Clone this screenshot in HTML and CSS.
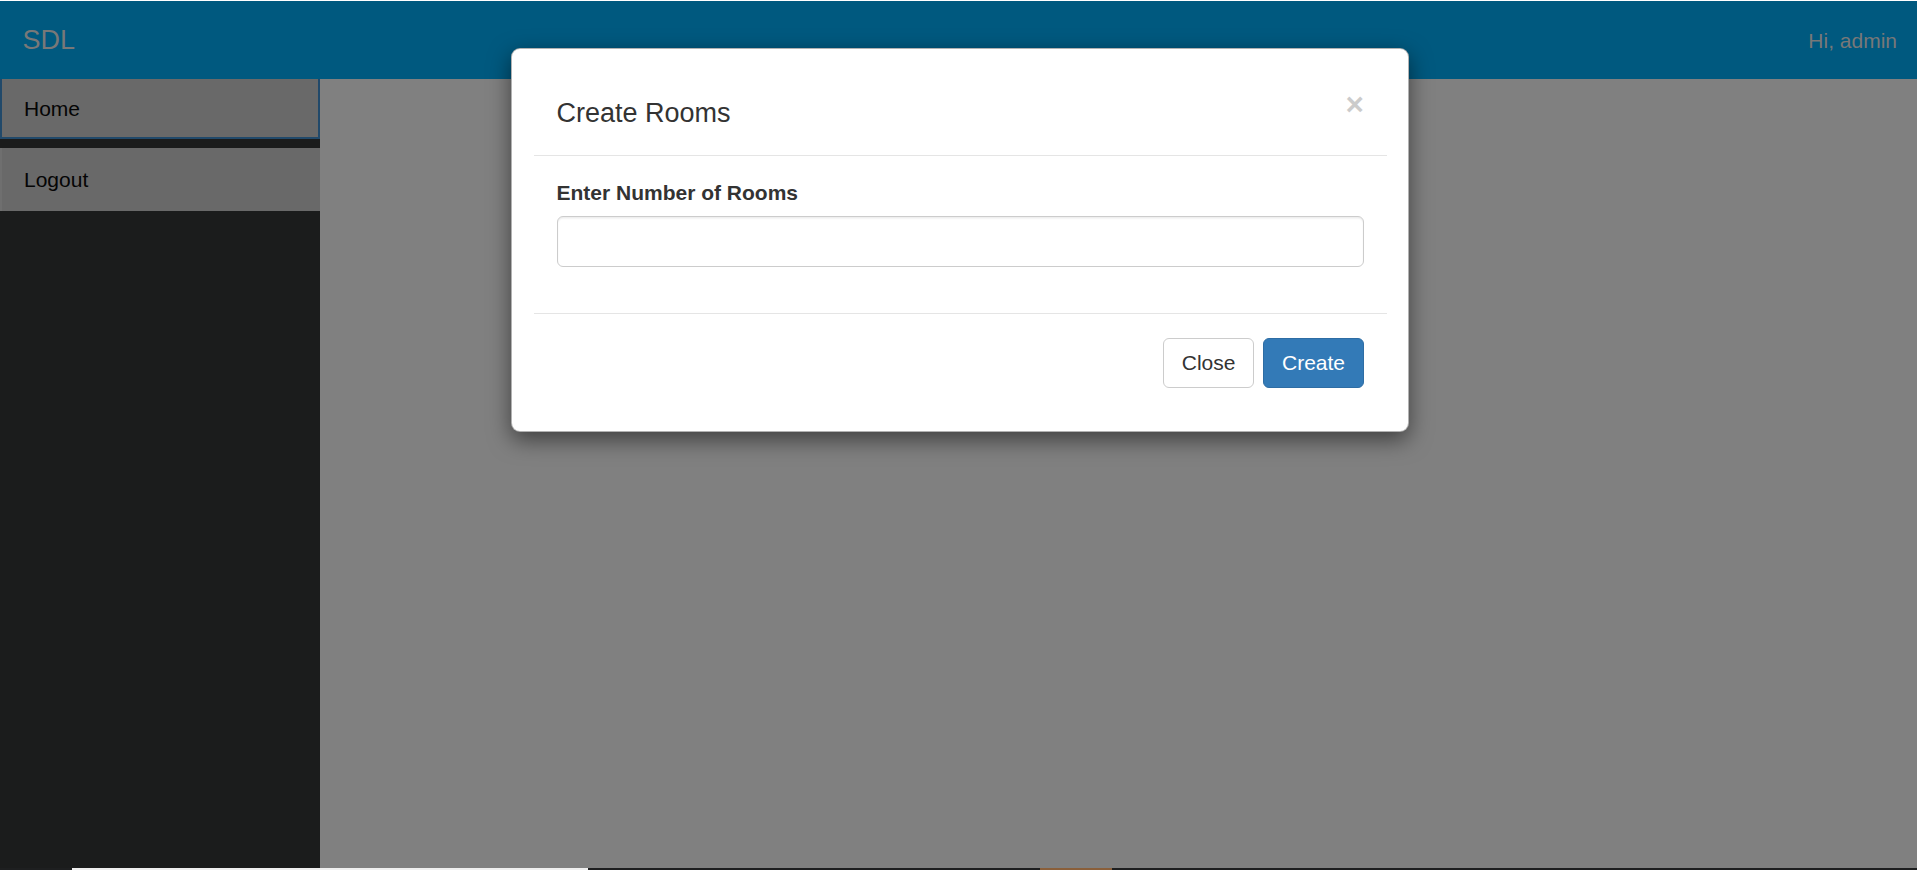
FILE: index.html
```html
<!DOCTYPE html>
<html lang="en">
<head>
<meta charset="utf-8">
<title>SDL</title>
<link rel="stylesheet" href="styles.css">
</head>
<body>
<div class="page">
  <div class="top-line"></div>
  <header class="navbar">
    <span class="brand">SDL</span>
    <span class="greeting">Hi, admin</span>
  </header>
  <div class="layout">
    <nav class="sidebar">
      <a class="side-item side-item-active">Home</a>
      <a class="side-item side-item-plain">Logout</a>
    </nav>
    <main class="content"></main>
  </div>
  <div class="taskbar">
    <span class="tb tb-dark tb-a"></span>
    <span class="tb tb-light tb-b"></span>
    <span class="tb tb-dark tb-c"></span>
    <span class="tb tb-brown tb-d"></span>
    <span class="tb tb-dark tb-e"></span>
  </div>
</div>

<div class="modal">
  <div class="modal-header">
    <h4 class="modal-title">Create Rooms</h4>
    <button class="close" type="button">&times;</button>
  </div>
  <div class="modal-body">
    <label class="field-label">Enter Number of Rooms</label>
    <input class="form-control" type="text">
  </div>
  <div class="modal-footer">
    <button class="btn btn-default" type="button">Close</button>
    <button class="btn btn-primary" type="button">Create</button>
  </div>
</div>
</body>
</html>
```

FILE: styles.css
```css
* { box-sizing: border-box; }

html, body {
  margin: 0;
  padding: 0;
  height: 100%;
  overflow: hidden;
}

body {
  font-family: "Liberation Sans", Arial, Helvetica, sans-serif;
  font-size: 21px;
  line-height: 1.42857;
  color: #333;
  background: #808080;
}

.page {
  display: flex;
  flex-direction: column;
  height: 870px;
}

.top-line {
  height: 1px;
  background: #ffffff;
  flex: none;
}

.navbar {
  flex: none;
  height: 78px;
  background: #00597f;
  display: flex;
  align-items: center;
  justify-content: space-between;
  padding: 0 20px 0 22.5px;
}

.brand {
  font-size: 27px;
  color: #787878;
  line-height: 1;
}

.greeting {
  font-size: 21px;
  color: #787878;
  line-height: 1;
}

.layout {
  flex: 1;
  display: flex;
  min-height: 0;
}

.sidebar {
  width: 320px;
  flex: none;
  background: #1b1c1c;
  display: flex;
  flex-direction: column;
  gap: 9px;
}

.side-item {
  display: flex;
  align-items: center;
  height: 60px;
  padding-left: 22.5px;
  background: #696969;
  color: #050505;
  font-size: 21px;
  text-decoration: none;
}

.side-item-active {
  border: 2px solid #21496a;
  border-top: none;
  padding-left: 22px;
  padding-top: 2px;
}

.side-item-plain {
  height: 63px;
  border-left: 2px solid #6f6f6f;
  padding-left: 22px;
}

.content {
  flex: 1;
  background: #808080;
}

.taskbar {
  flex: none;
  height: 2px;
  display: flex;
}

.tb { display: block; height: 2px; }
.tb-dark { background: #1e1f20; }
.tb-light { background: #efefef; }
.tb-brown { background: #8a5f3a; }
.tb-a { width: 72px; }
.tb-b { width: 516px; }
.tb-c { width: 452px; }
.tb-d { width: 72px; }
.tb-e { flex: 1; }

/* Modal (overlays the page) */
.modal {
  position: absolute;
  top: 48px;
  left: 511px;
  width: 898px;
  background: #fff;
  border: 1.5px solid rgba(0, 0, 0, 0.3);
  border-radius: 9px;
  box-shadow: 0 7.5px 22.5px rgba(0, 0, 0, 0.5);
  padding: 22px 21.5px 21px 22px;
}

.modal-header {
  display: flex;
  justify-content: space-between;
  align-items: flex-start;
  padding: 22.5px;
  border-bottom: 1.5px solid #e5e5e5;
}

.modal-title {
  margin: 0;
  font-size: 27px;
  font-weight: 500;
  line-height: 1.42857;
  color: #333;
}

.close {
  margin-top: -5px;
  padding: 0;
  border: 0;
  background: transparent;
  font-family: "Liberation Sans", Arial, sans-serif;
  font-size: 31.5px;
  font-weight: bold;
  line-height: 1;
  color: #000;
  opacity: 0.2;
  cursor: pointer;
}

.modal-body {
  padding: 22.5px 22.5px 46.5px;
}

.field-label {
  display: block;
  font-weight: bold;
  font-size: 21px;
  line-height: 30px;
  margin-bottom: 7.5px;
  color: #333;
}

.form-control {
  display: block;
  width: 100%;
  height: 51px;
  padding: 9px 18px;
  font-family: inherit;
  font-size: 21px;
  color: #555;
  background: #fff;
  border: 1.5px solid #ccc;
  border-radius: 6px;
  box-shadow: inset 0 1.5px 1.5px rgba(0, 0, 0, 0.075);
}

.modal-footer {
  display: flex;
  justify-content: flex-end;
  gap: 8.5px;
  padding: 23.5px 22.5px 22.5px;
  border-top: 1.5px solid #e5e5e5;
}

.btn {
  font-family: inherit;
  font-size: 21px;
  line-height: 30px;
  padding: 9px 18px;
  border: 1.5px solid transparent;
  border-radius: 6px;
  cursor: pointer;
}

.btn-default {
  background: #fff;
  border-color: #ccc;
  color: #333;
}

.btn-primary {
  background: #337ab7;
  border-color: #2e6da4;
  color: #fff;
}
```
